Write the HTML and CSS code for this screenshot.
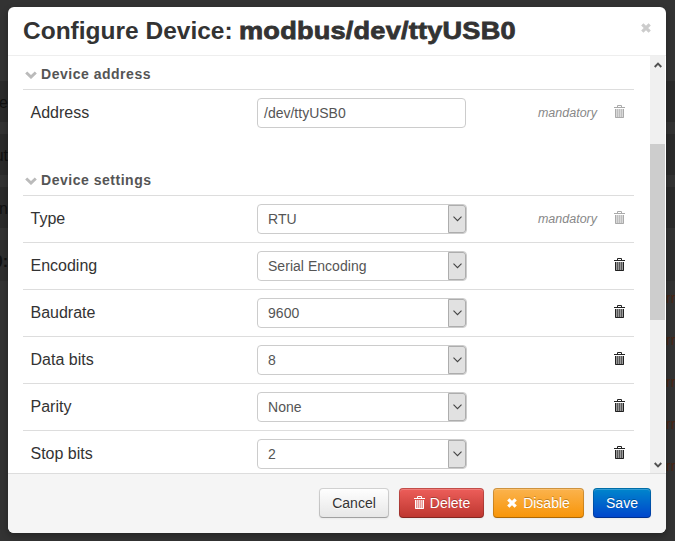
FILE: index.html
```html
<!DOCTYPE html>
<html lang="en">
<head>
<meta charset="utf-8">
<title>Configure Device</title>
<link rel="stylesheet" href="styles.css">
</head>
<body>
<svg class="sprite" width="0" height="0">
  <symbol id="trash" viewBox="0 0 11 13"><path d="M3.500 2V.5h4V2M0 2.500h11M1.500 4v8.500h8V4" fill="none" stroke="currentColor"/><path d="M1 4h9v9H1z" fill="currentColor" opacity=".45"/><path d="M3.500 4v8M5.500 4v8M7.500 4v8" stroke="currentColor" opacity=".55"/></symbol>
  <symbol id="cross" viewBox="0 0 10 10"><path d="M1.300 1.300l7.400 7.400M8.700 1.300L1.300 8.700" stroke="currentColor" stroke-width="3.200"/></symbol>
  <symbol id="chevron" viewBox="0 0 12 8"><path d="M1.200 1.500L6 6l4.800-4.500" fill="none" stroke="currentColor" stroke-width="3"/></symbol>
  <symbol id="arrow" viewBox="0 0 9 6"><path d="M.5.7l4 4 4-4" fill="none" stroke="currentColor" stroke-width="1.100"/></symbol>
  <symbol id="scroll" viewBox="0 0 8 6"><path d="M.7 1L4 4.300 7.300 1" fill="none" stroke="currentColor" stroke-width="1.900"/></symbol>
</svg>
<div class="page left">
  <div class="band b1">e</div><div class="band b2">ut</div><div class="band b3">on</div><div class="band b4">0:</div>
</div>
<div class="page right">
  <div class="band b1"></div><div class="band b2"></div><div class="band b3"></div><div class="band b4"></div>
  <div class="links"><span>rr</span><span>rr</span><span>rr</span><span>rr</span><span>rr</span></div>
</div>
<main class="modal">
  <header><h1>Configure Device: <b>modbus/dev/ttyUSB0</b></h1><svg class="close"><use href="#cross"/></svg></header>
  <div class="body">
    <div class="content">
      <h2><svg class="chev"><use href="#chevron"/></svg>Device address</h2>
      <div class="row"><label>Address</label><div class="input">/dev/ttyUSB0</div><em>mandatory</em><svg class="trash muted"><use href="#trash"/></svg></div>
      <h2 class="second"><svg class="chev"><use href="#chevron"/></svg>Device settings</h2>
      <div class="row"><label>Type</label><div class="select">RTU<i><svg><use href="#arrow"/></svg></i></div><em>mandatory</em><svg class="trash muted"><use href="#trash"/></svg></div>
      <div class="row"><label>Encoding</label><div class="select">Serial Encoding<i><svg><use href="#arrow"/></svg></i></div><svg class="trash"><use href="#trash"/></svg></div>
      <div class="row"><label>Baudrate</label><div class="select">9600<i><svg><use href="#arrow"/></svg></i></div><svg class="trash"><use href="#trash"/></svg></div>
      <div class="row"><label>Data bits</label><div class="select">8<i><svg><use href="#arrow"/></svg></i></div><svg class="trash"><use href="#trash"/></svg></div>
      <div class="row"><label>Parity</label><div class="select">None<i><svg><use href="#arrow"/></svg></i></div><svg class="trash"><use href="#trash"/></svg></div>
      <div class="row"><label>Stop bits</label><div class="select">2<i><svg><use href="#arrow"/></svg></i></div><svg class="trash"><use href="#trash"/></svg></div>
    </div>
    <div class="scrollbar"><svg class="up"><use href="#scroll"/></svg><div class="thumb"></div><svg class="down"><use href="#scroll"/></svg></div>
  </div>
  <footer>
    <div class="btn cancel">Cancel</div>
    <div class="btn delete"><svg class="trash"><use href="#trash"/></svg>Delete</div>
    <div class="btn disable"><svg class="x"><use href="#cross"/></svg>Disable</div>
    <div class="btn save">Save</div>
  </footer>
</main>
</body>
</html>
```

FILE: styles.css
```css
* { box-sizing: border-box; }
body { margin: 0; width: 675px; height: 541px; overflow: hidden; background: #333; font-family: "Liberation Sans", Arial, sans-serif; font-size: 14px; line-height: 20px; color: #333; }
svg { display: block; flex: none; }
.sprite { position: absolute; }
.page { position: absolute; top: 0; height: 541px; overflow: hidden; padding-top: 81px; }
.left { left: 0; width: 8px; }
.right { left: 666px; width: 9px; }
.band { height: 41px; margin-bottom: 12px; display: flex; justify-content: flex-end; background: #2b2b2b; color: #111; font-size: 16px; line-height: 43px; white-space: nowrap; }
.b4 { margin-bottom: 0; background: #2e2e2e; font-weight: bold; }
.links { margin-top: -4px; color: #4a2614; }
.links span { display: block; height: 42px; line-height: 42px; }
.modal { position: absolute; left: 8px; top: 7px; width: 658px; height: 526px; display: flex; flex-direction: column; background: #fff; border-radius: 6px; overflow: hidden; box-shadow: 0 3px 7px rgba(0,0,0,.3); }
header { height: 49px; flex: none; display: flex; justify-content: space-between; padding: 4px 15px 0; border-bottom: 1px solid #eee; }
h1 { margin: 0; font-size: 24.5px; line-height: 40px; white-space: nowrap; }
h1 b { display: inline-block; font-weight: 900; letter-spacing: .2px; -webkit-text-stroke: .8px #333; transform: scaleX(1.107); transform-origin: left; }
.close { width: 10px; height: 10px; margin-top: 16px; color: #ccc; }
header .close { margin-top: 12px; }
.body { height: 417px; flex: none; overflow: hidden; display: flex; }
.content { width: 642px; padding: 0 16px 0 15px; }
h2 { margin: 0; height: 34px; display: flex; align-items: center; gap: 4px; padding: 3px 0 0 2px; border-bottom: 1px solid #ddd; font-size: 14px; letter-spacing: .52px; color: #555; }
h2.second { height: 31px; margin-top: 28px; padding-top: 0; }
.chev { width: 12px; height: 8px; color: #bbb; margin-top: 2px; }
.row { height: 47px; display: flex; align-items: flex-start; padding: 8px 9px 0 7.5px; border-bottom: 1px solid #ddd; }
h2 + .row:has(.input) { border-color: transparent; }
label { width: 226.5px; font-size: 16px; line-height: 29px; }
.input, .select { height: 30px; border: 1px solid #ccc; border-radius: 4px; line-height: 29px; color: #555; }
.input { width: 209px; padding-left: 6px; }
.select { width: 210px; display: flex; justify-content: space-between; padding-left: 10px; letter-spacing: .03px; }
.select i { width: 18px; height: 28px; display: flex; align-items: center; justify-content: center; background: #e1e1e1; border: 1px solid #adadad; border-radius: 0 3px 3px 0; color: #444; }
.select i svg { width: 9px; height: 6px; }
em { margin-left: auto; font-size: 12.5px; line-height: 31px; color: #888; }
.trash { width: 11px; height: 13px; }
.row .trash { margin-left: auto; margin-top: 7px; color: #222; }
.row em + .trash { margin-left: 17px; }
.row .muted { color: #aaa; }
.scrollbar { width: 15px; background: #f0f0f0; display: flex; flex-direction: column; align-items: center; color: #505050; }
.scrollbar svg { width: 8px; height: 6px; }
.up { transform: scaleY(-1); margin-top: 6px; }
.thumb { width: 15px; height: 176px; margin-top: 76px; background: #cdcdcd; }
.down { margin-top: auto; margin-bottom: 5px; }
footer { flex: 1; display: flex; justify-content: flex-end; padding: 14px 15px 0; gap: 9px; background: #f5f5f5; border-top: 1px solid #ddd; }
.btn { height: 30px; display: flex; align-items: center; justify-content: center; border: 1px solid rgba(0,0,0,.18); border-bottom-color: rgba(0,0,0,.3); border-radius: 4px; color: #fff; text-shadow: 0 -1px 0 rgba(0,0,0,.25); box-shadow: inset 0 1px 0 rgba(255,255,255,.2), 0 1px 2px rgba(0,0,0,.05); background-origin: border-box; }
.cancel { width: 70px; color: #333; text-shadow: 0 1px 1px rgba(255,255,255,.75); background-image: linear-gradient(#fff, #e6e6e6); }
.delete { width: 85px; gap: 5px; margin-left: 1px; padding-left: 1px; background-image: linear-gradient(#ee5f5b, #bd362f); }
.delete .trash { margin-top: -2px; }
.disable { width: 91px; gap: 6px; background-image: linear-gradient(#fbb450, #f89406); }
.save { width: 58px; background-image: linear-gradient(#08c, #04c); }
.x { width: 10px; height: 10px; }
```
